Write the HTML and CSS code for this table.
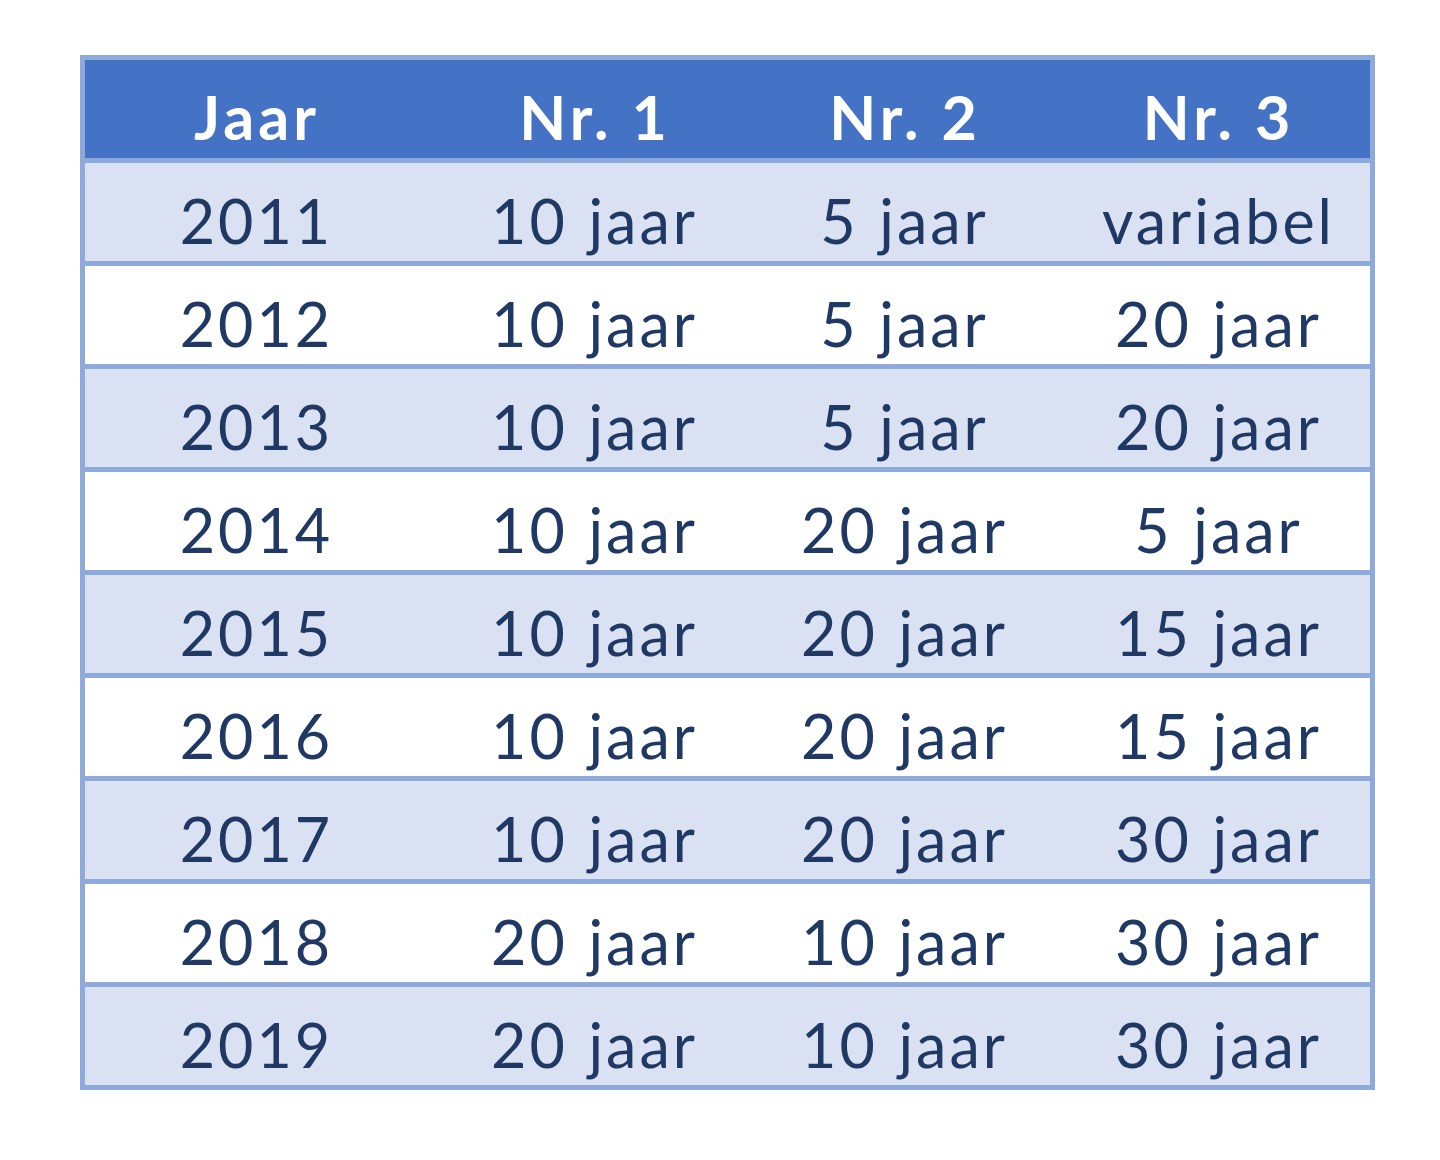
FILE: index.html
```html
<!DOCTYPE html>
<html lang="nl">
<head>
<meta charset="utf-8">
<title>Jaar tabel</title>
<link rel="stylesheet" href="styles.css">
</head>
<body>
<div class="page">
<table class="grid">
  <thead>
    <tr><th>Jaar</th><th>Nr. 1</th><th>Nr. 2</th><th class="c4">Nr. 3</th></tr>
  </thead>
  <tbody>
    <tr class="band"><td>2011</td><td>10 jaar</td><td>5 jaar</td><td class="c4">variabel</td></tr>
    <tr><td>2012</td><td>10 jaar</td><td>5 jaar</td><td class="c4">20 jaar</td></tr>
    <tr class="band"><td>2013</td><td>10 jaar</td><td>5 jaar</td><td class="c4">20 jaar</td></tr>
    <tr><td>2014</td><td>10 jaar</td><td>20 jaar</td><td class="c4">5 jaar</td></tr>
    <tr class="band"><td>2015</td><td>10 jaar</td><td>20 jaar</td><td class="c4">15 jaar</td></tr>
    <tr><td>2016</td><td>10 jaar</td><td>20 jaar</td><td class="c4">15 jaar</td></tr>
    <tr class="band"><td>2017</td><td>10 jaar</td><td>20 jaar</td><td class="c4">30 jaar</td></tr>
    <tr><td>2018</td><td>20 jaar</td><td>10 jaar</td><td class="c4">30 jaar</td></tr>
    <tr class="band last"><td>2019</td><td>20 jaar</td><td>10 jaar</td><td class="c4">30 jaar</td></tr>
  </tbody>
</table>
</div>
</body>
</html>
```
FILE: styles.css
```css
html, body {
  margin: 0;
  padding: 0;
  background: #ffffff;
}
.page {
  padding: 55px 0 0 80px;
}
.grid {
  border-collapse: separate;
  border-spacing: 0;
  border: 5px solid #8ea9db;
  table-layout: fixed;
  width: 1295px;
  font-family: Lato, "Liberation Sans", sans-serif;
  font-size: 61px;
  color: #1f3864;
}
.grid th, .grid td {
  padding: 0;
}
.grid th:nth-child(1), .grid td:nth-child(1) { width: 340px; }
.grid th:nth-child(2), .grid td:nth-child(2) { width: 336px; }
.grid th:nth-child(3), .grid td:nth-child(3) { width: 284px; }
.grid th, .grid td {
  text-align: center;
  vertical-align: middle;
  box-sizing: border-box;
  line-height: 1;
  border-bottom: 5px solid #8ea9db;
}
.grid th {
  background: #4472c4;
  color: #ffffff;
  font-weight: 700;
  height: 103px;
  padding-top: 14px;
  padding-left: 4px;
  letter-spacing: 4px;
}
.grid td {
  height: 103px;
  padding-top: 16px;
  padding-left: 3px;
  letter-spacing: 3px;
  word-spacing: 2px;
}
.grid .c4 {
  padding-left: 22px;
}
.grid tr.band td {
  background: #d9e1f2;
}
.grid tr.last td {
  border-bottom: 0;
  height: 98px;
}
```
